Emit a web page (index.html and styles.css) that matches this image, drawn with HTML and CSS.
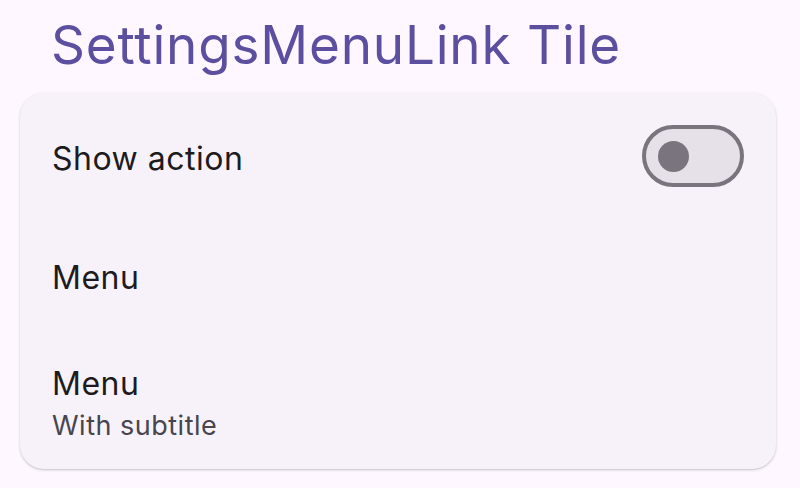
FILE: index.html
```html
<!DOCTYPE html>
<html>
<head>
<meta charset="utf-8">
<link rel="stylesheet" href="styles.css">
</head>
<body>
<h1 class="title">SettingsMenuLink Tile</h1>
<div class="card">
  <div class="row row-switch">
    <span class="label">Show action</span>
    <span class="switch"><span class="thumb"></span></span>
  </div>
  <div class="row row-menu">
    <span class="label">Menu</span>
  </div>
  <div class="row row-sub">
    <div class="stack">
      <span class="label">Menu</span>
      <span class="sub">With subtitle</span>
    </div>
  </div>
</div>
</body>
</html>
```

FILE: styles.css
```css
html, body {
  margin: 0;
  padding: 0;
  background: #fef7ff;
  font-family: Inter, Roboto, "Noto Sans", sans-serif;
  width: 800px;
  height: 488px;
  overflow: hidden;
}
.title {
  margin: 0;
  padding: 13px 0 0 51px;
  height: 93px;
  box-sizing: border-box;
  font-size: 53px;
  font-weight: 400;
  letter-spacing: 0.8px;
  line-height: 64px;
  color: #5d4f9f;
}
.card {
  margin: 0 24px 0 20px;
  height: 376px;
  background: #f7f2fa;
  border-radius: 24px;
  box-shadow: 0 1px 3px rgba(0,0,0,0.18), 0 1px 1px rgba(0,0,0,0.06);
  display: flex;
  flex-direction: column;
  box-sizing: border-box;
}
.row {
  display: flex;
  align-items: center;
  justify-content: space-between;
  padding: 0 32px;
}
.row-switch { height: 130px; }
.row-menu { height: 108px; }
.row-sub { height: 138px; padding-top: 10px; box-sizing: border-box; }
.label {
  font-size: 32px;
  letter-spacing: 0.5px;
  color: #1d1b20;
}
.stack {
  display: flex;
  flex-direction: column;
  gap: 2px;
}
.stack .label { line-height: 40px; }
.sub {
  font-size: 27px;
  letter-spacing: 0.5px;
  color: #49454f;
  line-height: 40px;
}
.switch {
  width: 102px;
  height: 62px;
  margin-bottom: 4px;
  box-sizing: border-box;
  border: 4px solid #79747e;
  border-radius: 31px;
  background: #e6e0e9;
  display: flex;
  align-items: center;
  padding-left: 12px;
}
.thumb {
  width: 31px;
  height: 31px;
  border-radius: 50%;
  background: #79747e;
}
```
